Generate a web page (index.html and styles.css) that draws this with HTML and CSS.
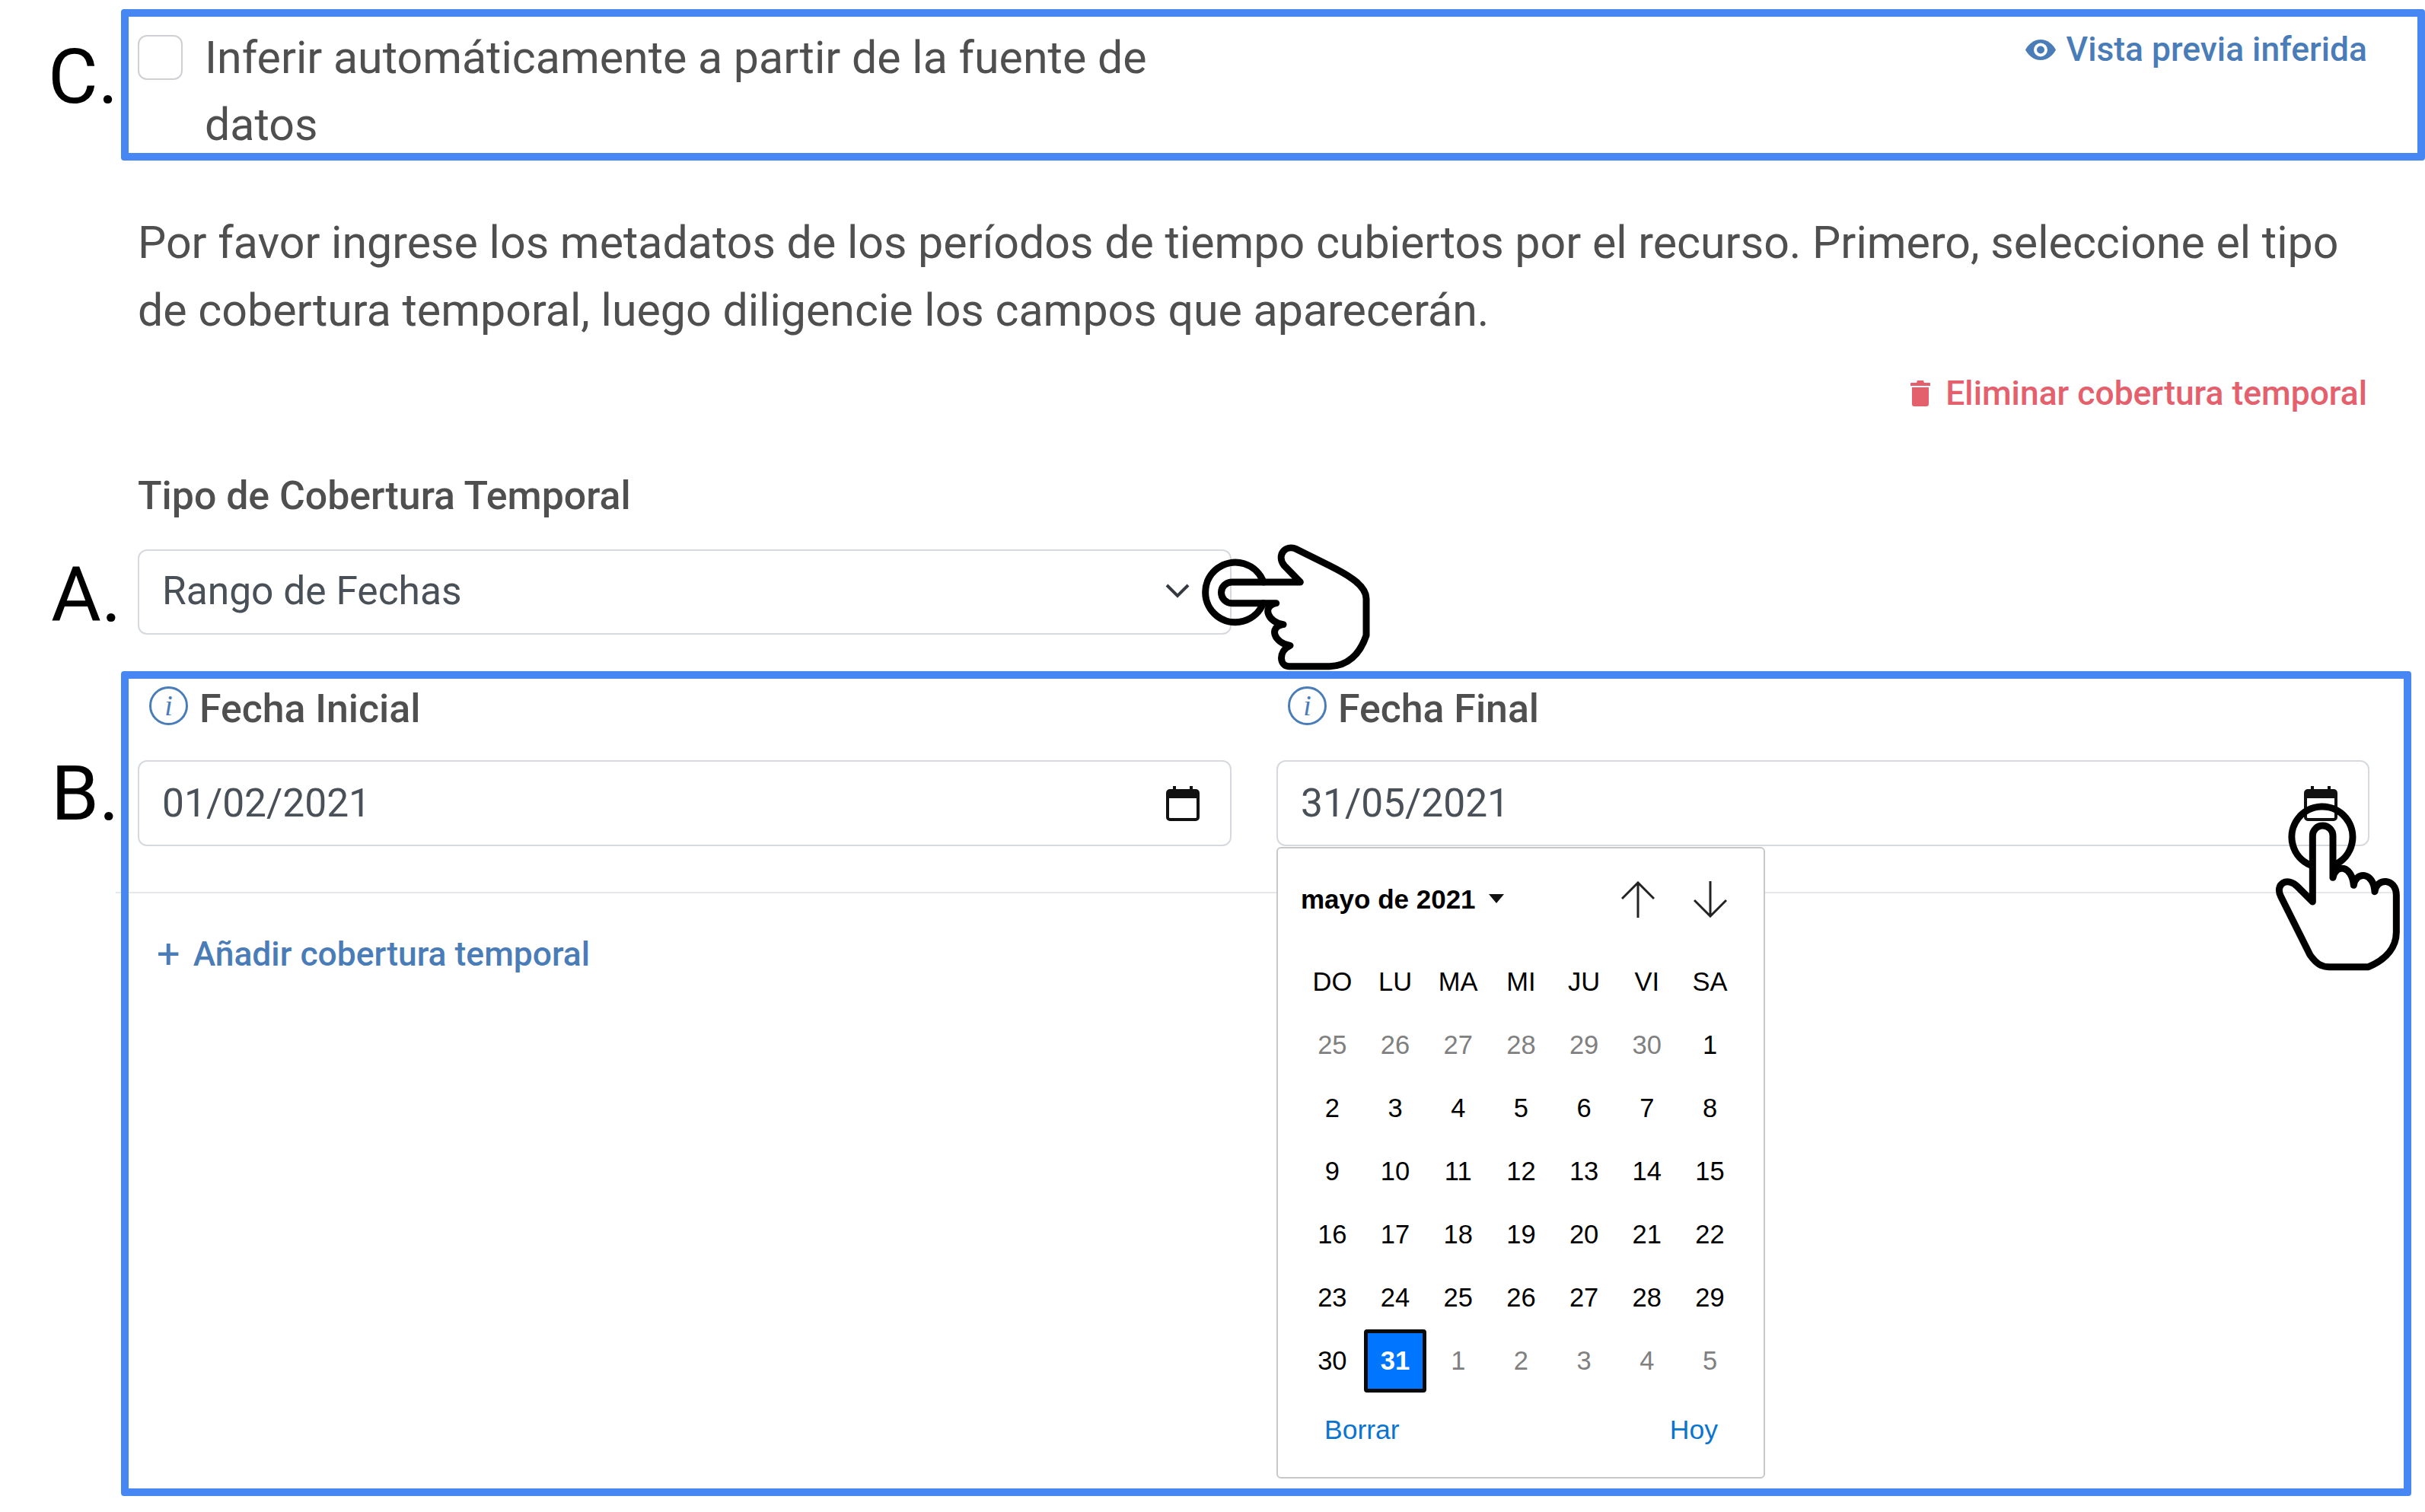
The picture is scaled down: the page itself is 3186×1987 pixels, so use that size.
FILE: index.html
```html
<!DOCTYPE html>
<html lang="es">
<head>
    <meta charset="UTF-8">
    <title>Cobertura temporal</title>
    <link rel="stylesheet" href="styles.css">
</head>
<body>
    <!-- letras de las anotaciones -->
    <span class="mark mark-c">C.</span>
    <span class="mark mark-a">A.</span>
    <span class="mark mark-b">B.</span>

    <section class="infer-box">
        <label class="infer-check">
            <span class="checkbox"></span>
            <span class="infer-text">Inferir automáticamente a partir de la fuente de datos</span>
        </label>
        <a class="link link-blue preview-link">
            <svg class="eye-icon" viewBox="0 0 40 27">
                <path d="M20 0C11 0 4 6 0 13.500C4 21 11 27 20 27S36 21 40 13.500C36 6 29 0 20 0Z" fill="#4a7db8"/>
                <circle cx="20" cy="13.500" r="9" fill="#fff"/>
                <circle cx="20" cy="13.500" r="5" fill="#4a7db8"/>
            </svg>
            Vista previa inferida
        </a>
    </section>

    <main class="content">
        <p class="intro">Por favor ingrese los metadatos de los períodos de tiempo cubiertos por el recurso. Primero, seleccione el tipo de cobertura temporal, luego diligencie los campos que aparecerán.</p>
        <div class="delete-row">
            <a class="link link-red">
                <svg class="trash-icon" viewBox="0 0 26 34">
                    <path d="M9 0H17L18 3H25Q26 3 26 4V7H0V4Q0 3 1 3H8Z M2 9H24V31Q24 34 21 34H5Q2 34 2 31Z" fill="#e4606d"/>
                </svg>
                Eliminar cobertura temporal
            </a>
        </div>
        <h3 class="field-title">Tipo de Cobertura Temporal</h3>
        <div class="control select-control">
            Rango de Fechas
            <svg class="chevron" viewBox="0 0 32 19">
                <path d="M2 2L16 16L30 2" fill="none" stroke="#343a40" stroke-width="4"/>
            </svg>
        </div>
    </main>

    <section class="dates-box">
        <div class="date-row">
            <div class="date-field">
                <div class="date-label"><span class="info-icon">i</span>Fecha Inicial</div>
                <div class="control date-control">
                    01/02/2021
                    <svg class="calendar-icon" viewBox="0 0 44 46">
                        <path d="M11 0V6M33 0V6" stroke="#111" stroke-width="4"/>
                        <rect x="2" y="6" width="40" height="38" rx="3" fill="none" stroke="#111" stroke-width="4"/>
                        <rect x="2" y="6" width="40" height="10" fill="#111"/>
                    </svg>
                </div>
            </div>
            <div class="date-field">
                <div class="date-label"><span class="info-icon">i</span>Fecha Final</div>
                <div class="control date-control">
                    31/05/2021
                    <svg class="calendar-icon" viewBox="0 0 44 46">
                        <path d="M11 0V6M33 0V6" stroke="#111" stroke-width="4"/>
                        <rect x="2" y="6" width="40" height="38" rx="3" fill="none" stroke="#111" stroke-width="4"/>
                        <rect x="2" y="6" width="40" height="10" fill="#111"/>
                    </svg>
                </div>

                <!-- calendario desplegado -->
                <div class="calendar">
                    <div class="calendar-head">
                        <span class="month">mayo de 2021</span>
                        <span class="caret"></span>
                        <div class="arrows">
                            <svg viewBox="0 0 44 48"><path d="M22 48V2M1 23L22 2L43 23" fill="none" stroke="#222" stroke-width="3"/></svg>
                            <svg viewBox="0 0 44 48"><path d="M22 0V46M1 25L22 46L43 25" fill="none" stroke="#222" stroke-width="3"/></svg>
                        </div>
                    </div>
                    <div class="days">
                        <span>DO</span><span>LU</span><span>MA</span><span>MI</span><span>JU</span><span>VI</span><span>SA</span>
                        <span class="off">25</span><span class="off">26</span><span class="off">27</span><span class="off">28</span><span class="off">29</span><span class="off">30</span><span>1</span>
                        <span>2</span><span>3</span><span>4</span><span>5</span><span>6</span><span>7</span><span>8</span>
                        <span>9</span><span>10</span><span>11</span><span>12</span><span>13</span><span>14</span><span>15</span>
                        <span>16</span><span>17</span><span>18</span><span>19</span><span>20</span><span>21</span><span>22</span>
                        <span>23</span><span>24</span><span>25</span><span>26</span><span>27</span><span>28</span><span>29</span>
                        <span>30</span><span class="selected">31</span><span class="off">1</span><span class="off">2</span><span class="off">3</span><span class="off">4</span><span class="off">5</span>
                    </div>
                    <div class="calendar-foot">
                        <a>Borrar</a>
                        <a>Hoy</a>
                    </div>
                </div>
            </div>
        </div>
        <div class="divider"></div>
        <a class="link link-blue add-link"><span class="plus">+</span>Añadir cobertura temporal</a>
    </section>

    <!-- manos encima de los campos -->
    <svg class="hand hand-select" viewBox="0 0 1500 660">
        <path d="M780 255A118 118 0 1 0 779 338"/>
        <path d="M830 338H655A41.500 41.500 0 0 1 655 255H925L862 190C830 150 865 105 910 125L1040 190C1120 230 1185 270 1185 320V465C1160 540 1110 587 1040 587H880C845 587 835 530 885 505C820 495 800 430 858 422C800 415 770 350 830 338"/>
    </svg>
    <svg class="hand hand-calendar" viewBox="0 0 918 960">
        <path d="M465 470A120 120 0 1 1 565 468"/>
        <path d="M555 520V355A40 40 0 0 0 475 355V615L415 555C375 515 325 545 350 595L465 825C490 860 510 872 540 872H695C770 840 805 790 805 735V590C805 520 725 520 720 575C715 495 645 495 637 550C630 470 565 465 555 520"/>
    </svg>
</body>
</html>
```
FILE: styles.css
```css
body {
    margin: 0;
    width: 3186px;
    height: 1987px;
    position: relative;
    overflow: hidden;
    background-color: #fff;
    font-family: Roboto, sans-serif;
    color: #4f4f4f;
}

/* letras A. B. C. */
.mark {
    position: absolute;
    font-size: 101px;
    line-height: 1;
    color: #000;
}
.mark-c { left: 63px; top: 50px; }
.mark-a { left: 67px; top: 731px; }
.mark-b { left: 67px; top: 992px; }

/* recuadro C */
.infer-box {
    display: flex;
    justify-content: space-between;
    align-items: flex-start;
    box-sizing: border-box;
    height: 199px;
    margin: 12px 0 0 159px;
    border: 10px solid #4687f4;
    border-radius: 4px;
    padding: 0 66px 0 12px;
}
.infer-check {
    display: flex;
    align-items: flex-start;
    gap: 29px;
    width: 1340px;
}
.checkbox {
    flex: none;
    width: 55px;
    height: 55px;
    margin-top: 24px;
    border: 2px solid #ced0d3;
    border-radius: 12px;
}
.infer-text {
    font-size: 59.100px;
    line-height: 88px;
    margin-top: 10px;
}

.link {
    display: inline-flex;
    align-items: center;
    font-size: 44.400px;
    font-weight: 500;
}
.link-blue { color: #4a7db8; }
.link-red { color: #e4606d; }
.preview-link {
    gap: 14px;
    margin-top: 17px;
}
.eye-icon { width: 40px; height: 27px; }

.content {
    box-sizing: border-box;
    width: 3113px;
    padding-left: 181px;
}
.intro {
    margin: 63px 0 0;
    font-size: 59.100px;
    line-height: 89px;
}
.delete-row {
    display: flex;
    justify-content: flex-end;
    padding-right: 3px;
    margin-top: 39px;
}
.link-red { gap: 20px; }
.trash-icon { width: 26px; height: 34px; }
.field-title {
    margin: 79px 0 40px;
    font-size: 51.800px;
    line-height: 60px;
    font-weight: 500;
}

/* campos */
.control {
    display: flex;
    justify-content: space-between;
    align-items: center;
    box-sizing: border-box;
    height: 112px;
    border: 2px solid #d6d9dd;
    border-radius: 12px;
    padding: 0 40px 0 30px;
    font-size: 51.500px;
    color: #495057;
}
.date-control { height: 113px; }
.select-control {
    width: 1437px;
    padding: 0 53px 3px 30px;
}
.chevron { width: 32px; height: 19px; }
.calendar-icon { width: 44px; height: 46px; }

/* recuadro B */
.dates-box {
    position: relative;
    box-sizing: border-box;
    width: 3009px;
    height: 1084px;
    margin: 48px 0 0 159px;
    padding: 0 55px 0 12px;
    border: 10px solid #4687f4;
    border-radius: 4px;
}
.date-row {
    display: grid;
    grid-template-columns: 1437px 1436px;
    gap: 59px;
}
.date-field { position: relative; }
.date-label {
    display: flex;
    align-items: center;
    gap: 15px;
    height: 107px;
    padding: 0 0 28px 15px;
    box-sizing: border-box;
    font-size: 51.800px;
    font-weight: 500;
}
.info-icon {
    box-sizing: border-box;
    width: 51px;
    height: 51px;
    margin-top: -8px;
    border: 3px solid #4a7db8;
    border-radius: 50%;
    text-align: center;
    font: italic 38px/45px "Liberation Serif", serif;
    color: #4a7db8;
}
.divider {
    position: relative;
    margin: 60px 0 0 -12px;
    width: 2974px;
    height: 2px;
    background-color: #e5e7ea;
}
/* la línea asoma un poco a la izquierda del recuadro */
.divider::before {
    content: "";
    position: absolute;
    left: -17px;
    top: 0;
    width: 7px;
    height: 2px;
    background-color: #e5e7ea;
}
.add-link {
    gap: 17px;
    margin: 48px 0 0 25px;
}
.plus { font-weight: 400; font-size: 54px; }

/* calendario */
.calendar {
    position: absolute;
    z-index: 1;
    left: 0;
    top: 221px;
    box-sizing: border-box;
    width: 642px;
    height: 830px;
    padding: 0 30px;
    background-color: #fff;
    border: 2px solid #c8c8c8;
    border-radius: 6px;
    font-family: "Liberation Sans", Arial, sans-serif;
    font-size: 34.500px;
    color: #000;
}
.calendar-head {
    display: flex;
    align-items: center;
    height: 134px;
}
.month { font-weight: bold; font-size: 35px; }
.caret {
    width: 0;
    height: 0;
    margin: 0 0 3px 17px;
    border-left: 10px solid transparent;
    border-right: 10px solid transparent;
    border-top: 12px solid #111;
}
.arrows {
    display: flex;
    gap: 51px;
    margin-left: auto;
    margin-right: 18px;
}
.arrows svg { width: 44px; height: 48px; }
.days {
    display: grid;
    grid-template-columns: repeat(7, 82.700px);
    grid-auto-rows: 83px;
}
.days span {
    display: flex;
    align-items: center;
    justify-content: center;
}
.days .off { color: #808080; }
.days .selected {
    box-sizing: border-box;
    background-color: #0075ff;
    border: 5px solid #0a0a0a;
    border-radius: 4px;
    color: #fff;
    font-weight: bold;
}
.calendar-foot {
    display: flex;
    justify-content: space-between;
    padding: 29px 30px 0 31px;
    font-size: 35.500px;
    color: #0a74d1;
}

/* manos */
.hand {
    position: absolute;
    z-index: 2;
    fill: none;
    stroke: #000;
    stroke-width: 27;
    stroke-linecap: round;
    stroke-linejoin: round;
}
.hand-select {
    left: 1400px;
    top: 680px;
    width: 500px;
    height: 220px;
}
.hand-calendar {
    left: 2880px;
    top: 980px;
    width: 306px;
    height: 320px;
}
```
